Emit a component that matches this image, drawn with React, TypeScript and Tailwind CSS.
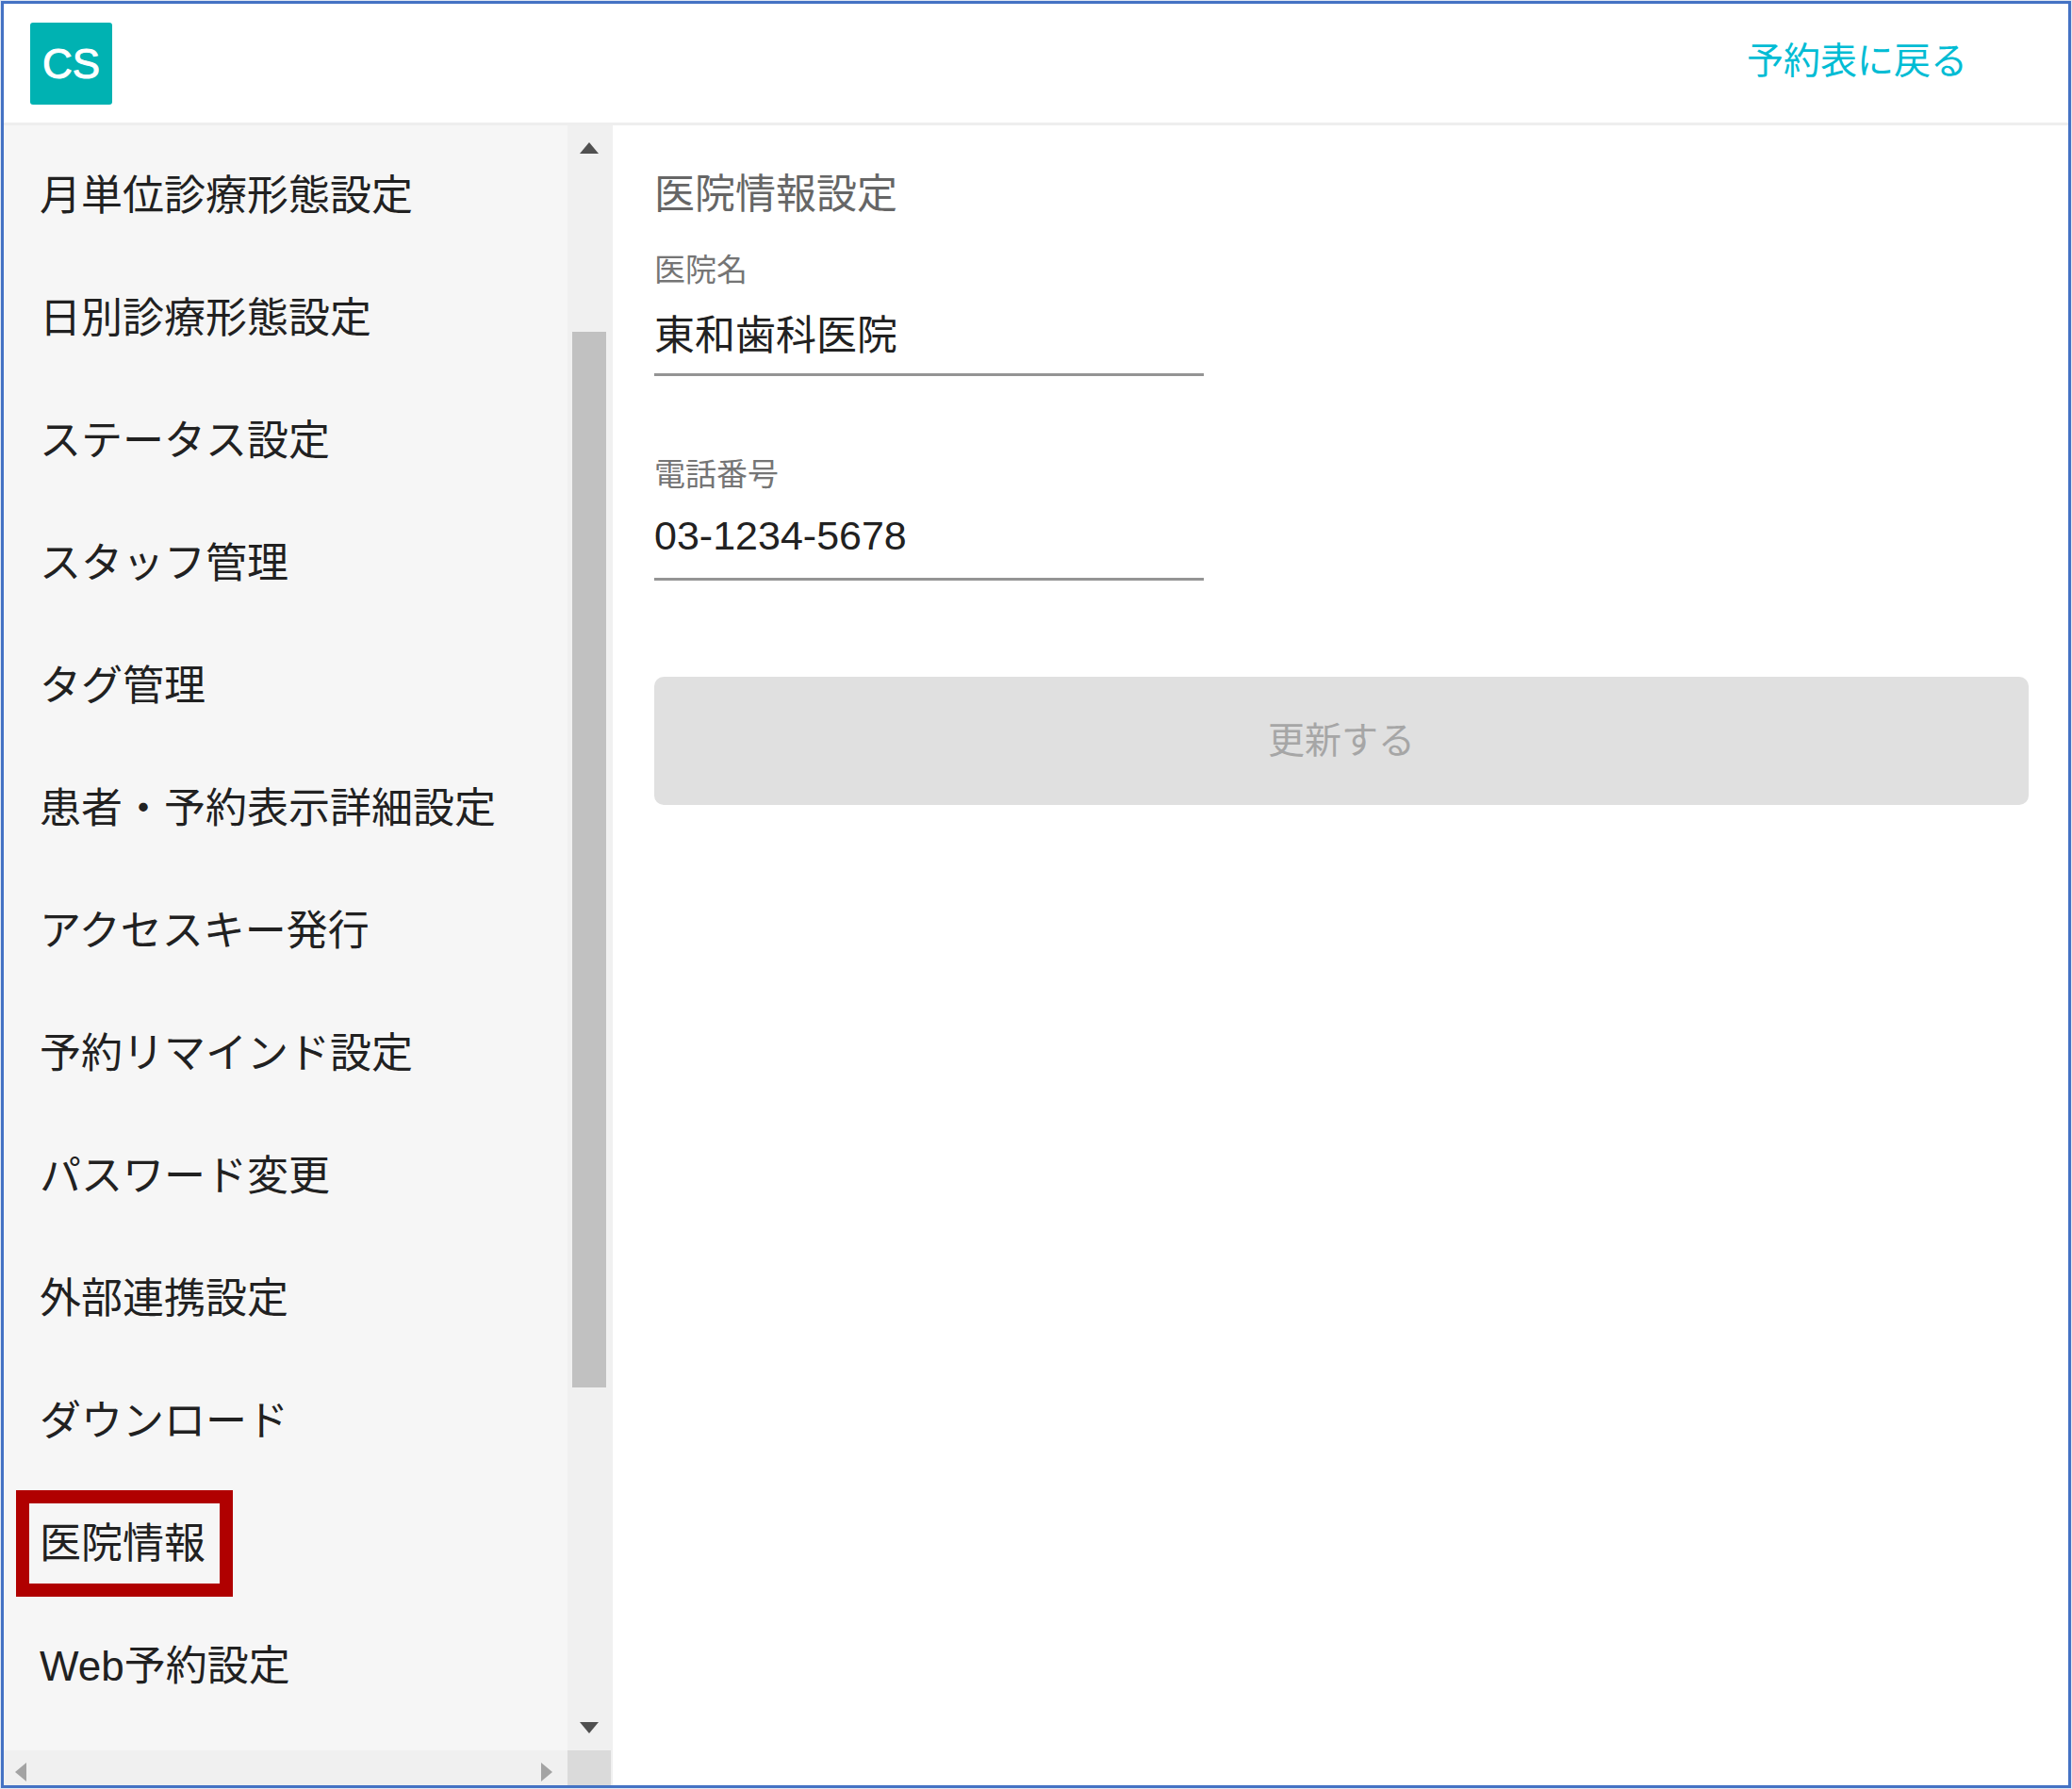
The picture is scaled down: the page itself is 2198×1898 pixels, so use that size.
import React from 'react'

const menuItems = [
  { id: 'monthly', label: '月単位診療形態設定' },
  { id: 'daily', label: '日別診療形態設定' },
  { id: 'status', label: 'ステータス設定' },
  { id: 'staff', label: 'スタッフ管理' },
  { id: 'tag', label: 'タグ管理' },
  { id: 'patient', label: '患者・予約表示詳細設定' },
  { id: 'accesskey', label: 'アクセスキー発行' },
  { id: 'remind', label: '予約リマインド設定' },
  { id: 'password', label: 'パスワード変更' },
  { id: 'external', label: '外部連携設定' },
  { id: 'download', label: 'ダウンロード' },
  { id: 'clinic', label: '医院情報' },
  { id: 'web', label: 'Web予約設定' },
]

const Header = () => {
  return (
    <header className="flex h-[129px] shrink-0 items-start justify-between border-b-3 border-[#eeeeee] pt-5 pr-[107px] pl-7">
      <div className="flex size-[87px] items-center justify-center rounded-[3px] bg-[#00b2b2] text-[44px] text-white [-webkit-text-stroke:1px_white]">
        CS
      </div>
      <a href="#schedule" className="mt-3 text-[39px] leading-[58px] text-[#00bcd4]">
        予約表に戻る
      </a>
    </header>
  )
}

const VerticalScrollbar = () => {
  return (
    <div className="flex w-12 shrink-0 flex-col bg-[#f0f0f0]">
      <div className="flex h-12 items-center pl-[13px]">
        <svg width="20" height="12" viewBox="0 0 20 12" fill="#505050">
          <path d="M10 0L20 12H0z" />
        </svg>
      </div>
      <div className="flex flex-1 flex-col pr-[7px] pl-[5px]">
        <div className="flex-[171]" />
        <div className="flex-[1120] bg-[#c1c1c1]" />
        <div className="flex-[337]" />
      </div>
      <div className="flex h-12 items-center pl-[13px]">
        <svg width="20" height="12" viewBox="0 0 20 12" fill="#505050">
          <path d="M0 0H20L10 12z" />
        </svg>
      </div>
    </div>
  )
}

const HorizontalScrollbar = () => {
  return (
    <div className="flex h-[37px] shrink-0">
      <div className="flex flex-1 items-start justify-between bg-[#f0f0f0] pt-[13px] pr-4 pl-3">
        <svg width="12" height="20" viewBox="0 0 12 20" fill="#a3a3a3">
          <path d="M12 0V20L0 10z" />
        </svg>
        <svg width="12" height="20" viewBox="0 0 12 20" fill="#a3a3a3">
          <path d="M0 0L12 10L0 20z" />
        </svg>
      </div>
      <div className="w-12 border-r-2 border-[#f0f0f0] bg-[#dadada]" />
    </div>
  )
}

const Sidebar = ({ active }: any) => {
  return (
    <aside className="flex w-[646px] shrink-0 flex-col bg-[#f6f6f6]">
      <div className="flex flex-1">
        <nav className="flex-1 pt-[10px]">
          <ul>
            {menuItems.map((item: any) => (
              <li key={item.id} className="relative flex h-[130px] items-center pl-[38px]">
                <a href={`#${item.id}`} className="text-[44px] leading-[64px] whitespace-nowrap text-[#212121]">
                  {item.label}
                </a>
                {item.id === active && (
                  <span className="pointer-events-none absolute top-2 left-[13px] h-[113px] w-[230px] border-14 border-[#b00000]" />
                )}
              </li>
            ))}
          </ul>
        </nav>
        <VerticalScrollbar />
      </div>
      <HorizontalScrollbar />
    </aside>
  )
}

const Field = ({ id, label, value }: any) => {
  return (
    <div className="flex w-[583px] flex-col">
      <label htmlFor={id} className="text-[33px] leading-[48px] text-[#757575]">
        {label}
      </label>
      <input
        id={id}
        type="text"
        defaultValue={value}
        className="h-[88px] border-b-3 border-[#949494] bg-transparent pb-1 text-[43px] leading-[64px] text-[#212121] outline-none"
      />
    </div>
  )
}

const ClinicForm = () => {
  return (
    <main className="flex-1 pt-[41px] pr-[42px] pl-11">
      <h1 className="text-[43px] leading-[64px] text-[#666666]">医院情報設定</h1>
      <form className="mt-[25px] flex flex-col" onSubmit={(e) => e.preventDefault()}>
        <div className="flex flex-col gap-[81px]">
          <Field id="clinic-name" label="医院名" value="東和歯科医院" />
          <Field id="clinic-tel" label="電話番号" value="03-1234-5678" />
        </div>
        <button
          type="submit"
          disabled
          className="mt-[102px] h-[136px] w-full rounded-[10px] bg-[#e0e0e0] text-[39px] text-[#a6a6a6]"
        >
          更新する
        </button>
      </form>
    </main>
  )
}

const App = () => {
  return (
    <div className="flex min-h-screen bg-[#dfe6f3] p-px font-['Liberation_Sans','Noto_Sans_CJK_JP',sans-serif]">
      <div className="flex flex-1 flex-col border-3 border-[#4472c4] bg-white">
        <Header />
        <div className="flex flex-1">
          <Sidebar active="clinic" />
          <ClinicForm />
        </div>
      </div>
    </div>
  )
}

export default App
